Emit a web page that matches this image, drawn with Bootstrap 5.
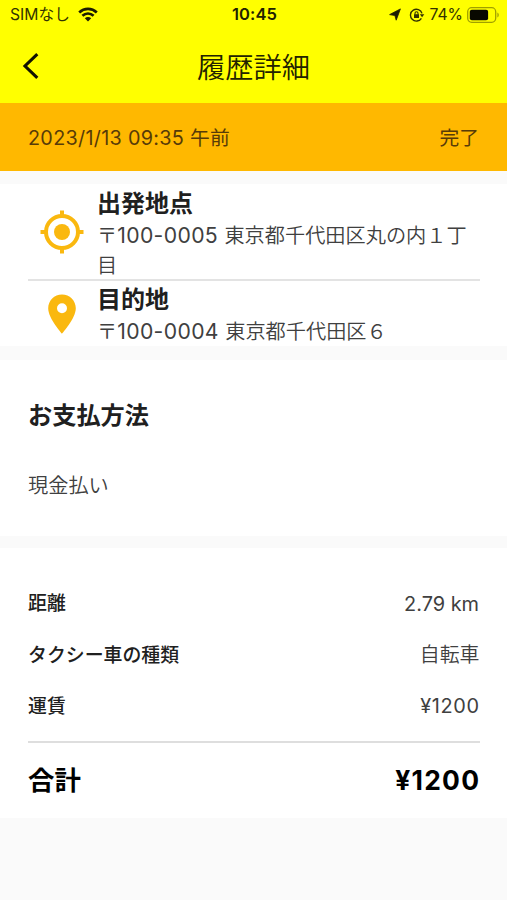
<!DOCTYPE html>
<html lang="ja">
<head>
<meta charset="utf-8">
<meta name="viewport" content="width=device-width, initial-scale=1">
<title>履歴詳細</title>
<link href="https://cdn.jsdelivr.net/npm/bootstrap@5.3.0/dist/css/bootstrap.min.css" rel="stylesheet">
<style>
  body { font-family: Inter, "Noto Sans CJK JP", sans-serif; background: #fafafa; color: #202020; min-height: 900px; font-size: 19.5px; }
  .app-head { background: #ff0; height: 103px; color: #222200; }
  .status { height: 29px; padding: 0 8px 0 10px; font-size: 15.7px; line-height: 29px; color: #333300; }
  .status > div { flex: 1 1 0; }
  .clock { font-weight: 600; font-size: 16.5px; color: #222200; letter-spacing: .15px; }
  .title-bar { height: 74px; padding: 0 22px; }
  .title-bar > span { flex: 1 1 0; }
  .page-title { font-size: 28.3px; line-height: 74px; padding-top: 3px; font-weight: 350; }
  .trip-bar { background: #ffb800; height: 67.5px; padding: 5px 28px 0 28px; color: #573b08; font-size: 19.8px; }
  .trip-date { letter-spacing: .3px; }
  .panel { background: #fff; padding: 0 27px 0 28px; }
  .route { margin-top: 13.5px; height: 162px; }
  .stop-row { height: 95px; padding-top: 4px; }
  .stop-row + .stop-row { height: 67px; border-top: 2px solid #e3e3e3; padding-top: 3px; }
  .stop-icon { width: 69px; flex: none; padding-right: 2px; margin-top: -3px; }
  .stop-name { font-size: 24px; line-height: 34px; font-weight: 600; }
  .stop-addr { font-size: 20.2px; line-height: 30px; font-weight: 350; color: #404040; }
  .postcode { font-size: 21.2px; line-height: 1; font-weight: 400; letter-spacing: .35px; }
  .payment { margin-top: 14px; height: 176px; }
  .pay-title { font-size: 24.2px; line-height: 36px; padding-top: 38px; font-weight: 600; }
  .pay-kind { font-size: 20.2px; line-height: 30px; margin-top: 37px; font-weight: 350; color: #404040; }
  .fare { margin-top: 12px; height: 270px; padding-top: 31px; }
  .fare-row { height: 51.3px; padding-right: 1px; }
  .fare-label { font-size: 18.9px; font-weight: 500; }
  .fare-value { color: #404040; font-size: 19.9px; }
  .kind { font-weight: 350; margin-right: -.5px; }
  .yen { letter-spacing: .6px; margin-right: -.6px; }
  .total { border-top: 2px solid #dedede; margin-top: 8px; height: 77px; padding: 1px 1px 0 0; color: #000; font-weight: 600; font-size: 26.4px; }
  .total-value { font-weight: 700; letter-spacing: 1.25px; margin-right: -1.2px; }
</style>
<script src="https://cdn.jsdelivr.net/npm/bootstrap@5.3.0/dist/js/bootstrap.bundle.min.js"></script>
</head>
<body>
<header class="app-head">
  <div class="status d-flex align-items-center">
    <div class="d-flex align-items-center gap-2"><span class="carrier">SIMなし</span>
      <svg width="20" height="15" viewBox="0 0 20 15" fill="none" stroke="#1d1d00" stroke-width="2.7"><path d="M1.2 5.4C6.2.8 13.8.8 18.8 5.4M4.4 8.8C7.7 5.8 12.3 5.8 15.6 8.8"/><path d="M10 14.6 6.8 11.3c1.8-1.7 4.6-1.7 6.4 0z" fill="#1d1d00" stroke="none"/></svg>
    </div>
    <span class="clock">10:45</span>
    <div class="d-flex align-items-center justify-content-end">
      <svg class="me-2" width="12" height="13" viewBox="0 0 12 13" fill="#1d1d00" stroke="#1d1d00" stroke-width=".8" stroke-linejoin="round"><path d="M11.400.9 7.200 12.200 5.900 7.600.6 6.600z"/></svg>
      <svg class="me-1" width="16" height="14" viewBox="0 0 16 14" fill="none" stroke="#333300" stroke-width="1.4"><path d="M12.4 10.3A5.9 5.9 0 1 1 13 5.4"/><path d="M10.8 6.2h4.5l-2.2 3z" fill="#333300" stroke="none"/><rect x="5" y="6.2" width="5" height="3.8" fill="#333300" stroke="none"/><path d="M6 6.5V5.3a1.5 1.5 0 0 1 3 0v1.2" stroke-width="1.1"/></svg>
      <span>74%</span>
      <svg class="ms-1" width="32" height="16" viewBox="0 0 32 16"><rect x=".7" y=".7" width="28" height="14.6" rx="4" fill="none" stroke="#a0a000" stroke-width="1.3"/><rect x="2.8" y="2.8" width="18.3" height="10.4" rx="2" fill="#090900"/><path d="M30.4 5.5v5c1.8-1 1.8-4 0-5z" fill="#a0a000"/></svg>
    </div>
  </div>
  <div class="title-bar d-flex align-items-center">
    <span><svg class="d-block" width="18" height="28" viewBox="0 0 18 28" fill="none" stroke="#111100" stroke-width="3.1"><path d="M15.3 2.2 3 14l12.3 11.8"/></svg></span>
    <h1 class="page-title m-0">履歴詳細</h1>
    <span></span>
  </div>
</header>
<main>
  <div class="trip-bar d-flex justify-content-between align-items-center">
    <span class="trip-date">2023/1/13 09:35 午前</span><span class="trip-state">完了</span>
  </div>
  <section class="panel route">
    <div class="stop-row d-flex align-items-center">
      <div class="stop-icon d-flex justify-content-center"><svg width="44" height="44" viewBox="0 0 44 44" fill="none" stroke="#fab80f"><circle cx="22" cy="22" r="16" stroke-width="4"/><circle cx="22" cy="22" r="8" fill="#fab80f" stroke="none"/><path d="M22 .5v6M22 37.5v6M.5 22h6M37.5 22h6" stroke-width="4"/></svg></div>
      <div><div class="stop-name">出発地点</div><div class="stop-addr">〒<span class="postcode">100-0005 </span>東京都千代田区丸の内１丁<br>目</div></div>
    </div>
    <div class="stop-row d-flex align-items-center">
      <div class="stop-icon d-flex justify-content-center"><svg width="28" height="40" viewBox="0 0 28 40"><path fill="#fab80f" fill-rule="evenodd" d="M14 .5C6.3.5.2 6.6.2 14.3.2 24.5 14 39.7 14 39.7S27.800 24.5 27.800 14.300C27.800 6.600 21.700.5 14 .5zM14 9.300a5 5 0 1 1 0 10 5 5 0 0 1 0-10z"/></svg></div>
      <div><div class="stop-name">目的地</div><div class="stop-addr">〒<span class="postcode">100-0004 </span>東京都千代田区６</div></div>
    </div>
  </section>
  <section class="panel payment">
    <div class="pay-title">お支払方法</div>
    <div class="pay-kind">現金払い</div>
  </section>
  <section class="panel fare">
    <div class="fare-row d-flex justify-content-between align-items-center"><span class="fare-label">距離</span><span class="fare-value">2.79 km</span></div>
    <div class="fare-row d-flex justify-content-between align-items-center"><span class="fare-label">タクシー車の種類</span><span class="fare-value kind">自転車</span></div>
    <div class="fare-row d-flex justify-content-between align-items-center"><span class="fare-label">運賃</span><span class="fare-value yen">¥1200</span></div>
    <div class="total d-flex justify-content-between align-items-center"><span class="total-label">合計</span><span class="total-value">¥1200</span></div>
  </section>
</main>
</body>
</html>
